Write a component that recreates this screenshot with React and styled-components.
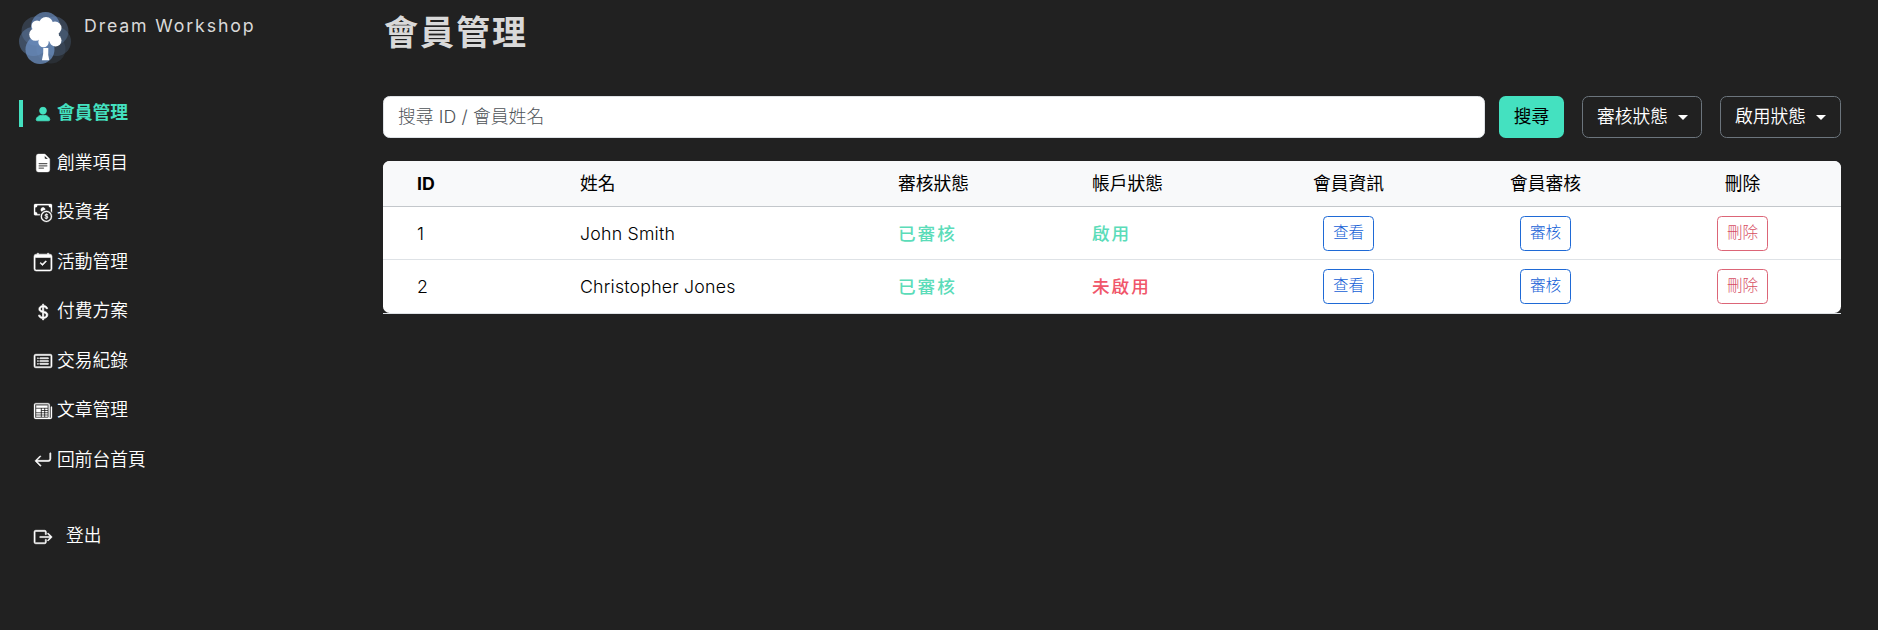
import React from "react";
import styled, { createGlobalStyle } from "styled-components";
import {
  BsPersonFill, BsFileEarmarkTextFill, BsCashCoin, BsCalendarCheck, BsCurrencyDollar,
  BsCardList, BsNewspaper, BsArrowReturnLeft, BsBoxArrowRight,
} from "react-icons/bs";

const GlobalStyle = createGlobalStyle`
  *, *::before, *::after { box-sizing: border-box; }
  body {
    margin: 0;
    background: #212121;
    color: #fff;
    font-family: Inter, "Noto Sans CJK TC", sans-serif;
    font-size: 17.75px;
    line-height: 1.5;
  }
`;

const Page = styled.div`
  display: flex;
  min-height: 630px;
  background: #212121;
`;

const Sidebar = styled.aside`
  width: 383px;
  flex: none;
  padding: 12px 0 0 19px;
`;

const Brand = styled.div`
  display: flex;
  align-items: flex-start;
  gap: 13px;
  height: 88px;
`;

const LogoMark = styled.svg`
  width: 52px;
  height: 52px;
  flex: none;
`;

const BrandName = styled.span`
  padding-top: 1px;
  color: #d9d9d9;
  letter-spacing: 1.85px;
  white-space: nowrap;
`;

const Nav = styled.nav`
  display: flex;
  flex-direction: column;
  gap: 22.5px;
`;

const NavItem = styled.a`
  display: flex;
  align-items: center;
  gap: ${(p) => p.$gap || "5px"};
  height: 27px;
  margin-top: ${(p) => p.$offset || 0};
  padding-left: 11px;
  border-left: 4px solid ${(p) => (p.$active ? "#44e1c0" : "transparent")};
  color: ${(p) => (p.$active ? "#44e1c0" : "#fff")};
  font-weight: ${(p) => (p.$active ? 700 : 350)};
  line-height: 27px;
  svg {
    flex: none;
    stroke: currentColor;
    stroke-width: ${(p) => p.$stroke};
    overflow: visible;
  }
`;

const NavLabel = styled.span`
  margin-top: -1.5px;
`;

const Main = styled.main`
  flex: 1;
  min-width: 0;
  padding: 12px 37px 0 0;
`;

const Title = styled.h2`
  margin: 0 0 42px;
  padding-left: 1px;
  color: #d9d9d9;
  font-size: 34px;
  font-weight: 700;
  line-height: 42px;
  letter-spacing: 2px;
`;

const Toolbar = styled.div`
  display: flex;
  height: 42px;
  margin-bottom: 23px;
`;

const SearchInput = styled.input`
  flex: 1;
  min-width: 0;
  padding: 0 14px;
  border: 1px solid #dee2e6;
  border-radius: 6.6px;
  background: #fff;
  font: inherit;
  font-weight: 300;
  letter-spacing: 0.1px;
  &::placeholder { color: #4d5257; opacity: 1; }
`;

const SearchButton = styled.button`
  width: 65px;
  margin-left: 14px;
  padding: 0;
  border: 0;
  border-radius: 6.6px;
  background: #44e1c0;
  color: #000;
  font: inherit;
`;

const FilterButton = styled.button`
  display: flex;
  align-items: center;
  justify-content: space-between;
  width: ${(p) => p.$width};
  margin-left: 18px;
  padding: 0 ${(p) => p.$endPadding} 0 14px;
  border: 1px solid #6c757d;
  border-radius: 6.6px;
  background: transparent;
  color: #fff;
  font: inherit;
  font-weight: 350;
  &::after {
    content: "";
    border-top: 5.3px solid #fff;
    border-left: 5.3px solid transparent;
    border-right: 5.3px solid transparent;
  }
`;

const TableFrame = styled.div`
  border-bottom: 1px solid #dee2e6;
`;

const Table = styled.table`
  width: 100%;
  table-layout: fixed;
  border-collapse: separate;
  border-spacing: 0;
  border-radius: 6.6px;
  overflow: hidden;
  background: #fff;
  color: #000;
`;

const Col = styled.col`
  width: ${(p) => p.$width};
`;

const HeadCell = styled.th`
  height: 46px;
  padding: 1px 9px 0;
  padding-left: ${(p) => (p.$first ? "34px" : "9px")};
  border-bottom: 1px solid #c3c7cb;
  background: #f8f9fa;
  text-align: ${(p) => (p.$center ? "center" : "left")};
  font-weight: ${(p) => (p.$first ? 700 : 400)};
`;

const Cell = styled.td`
  height: 53px;
  padding: ${(p) => (p.$center ? "0 9px" : "2px 9px 0")};
  padding-left: ${(p) => (p.$first ? "34px" : "9px")};
  text-align: ${(p) => (p.$center ? "center" : "left")};
  font-weight: 350;
  letter-spacing: ${(p) => (p.$center ? "normal" : "0.2px")};
  tr:not(:last-child) > & { border-bottom: 1px solid #dee2e6; }
`;

const Status = styled.span`
  color: ${(p) => (p.$ok ? "#5bdcb9" : "#f0566a")};
  font-size: 17.6px;
  font-weight: 500;
  letter-spacing: 2px;
`;

const RowButton = styled.button`
  display: inline-block;
  width: 51px;
  height: 35px;
  padding: 0 0 1px;
  border: 1px solid ${(p) => (p.$danger ? "#dc6577" : "#1f6ad6")};
  border-radius: 4.4px;
  background: transparent;
  color: ${(p) => (p.$danger ? "#d64d62" : "#1460d6")};
  font: inherit;
  font-size: 15.6px;
  font-weight: 300;
  vertical-align: middle;
`;

const navItems = [
  { label: "會員管理", icon: BsPersonFill, active: true, stroke: 0.8 },
  { label: "創業項目", icon: BsFileEarmarkTextFill, stroke: 0.3 },
  { label: "投資者", icon: BsCashCoin, stroke: 0.25 },
  { label: "活動管理", icon: BsCalendarCheck, stroke: 0.5 },
  { label: "付費方案", icon: BsCurrencyDollar, stroke: 0.6 },
  { label: "交易紀錄", icon: BsCardList, stroke: 0.5 },
  { label: "文章管理", icon: BsNewspaper, stroke: 0.25 },
  { label: "回前台首頁", icon: BsArrowReturnLeft, stroke: 0.5 },
  { label: "登出", icon: BsBoxArrowRight, gap: "14px", offset: "27px", stroke: 0.5 },
];

const columns = [
  { label: "ID", width: "188px", first: true },
  { label: "姓名", width: "318px" },
  { label: "審核狀態", width: "194px" },
  { label: "帳戶狀態", width: "167px" },
  { label: "會員資訊", width: "197px", center: true },
  { label: "會員審核", width: "197px", center: true },
  { label: "刪除", width: "197px", center: true },
];

const members = [
  { id: 1, name: "John Smith", enabled: true },
  { id: 2, name: "Christopher Jones", enabled: false },
];

function Logo() {
  return (
    <LogoMark viewBox="0 0 52 52" aria-hidden="true">
      <g fill="#6f94c9">
        <circle cx="17" cy="19" r="14.5" opacity=".25" />
        <circle cx="35" cy="19" r="14.5" opacity=".3" />
        <circle cx="37.5" cy="29.5" r="14.5" opacity=".22" />
        <circle cx="32" cy="37" r="14.5" opacity=".12" />
        <circle cx="14.5" cy="29.5" r="14.5" opacity=".4" />
        <circle cx="26.5" cy="14.5" r="14.5" opacity=".65" />
        <circle cx="21" cy="37.5" r="14.5" opacity=".72" />
      </g>
      <g fill="#fff">
        <circle cx="27" cy="12" r="7" />
        <circle cx="18" cy="14" r="5.5" />
        <circle cx="36" cy="16" r="6.5" />
        <circle cx="16.5" cy="22.5" r="6.3" />
        <circle cx="26" cy="21" r="9" />
        <circle cx="36.5" cy="28.5" r="6" />
        <circle cx="24.5" cy="30" r="5.2" />
        <circle cx="33" cy="23" r="7" />
        <path d="M24.3 36h5q-.6 7 1 12.300h-7.400q1.800-5.500 1.400-12.300z" />
      </g>
    </LogoMark>
  );
}

export default function App() {
  return (
    <>
      <GlobalStyle />
      <Page>
        <Sidebar>
          <Brand>
            <Logo />
            <BrandName>Dream Workshop</BrandName>
          </Brand>
          <Nav>
            {navItems.map(({ label, icon: Icon, active, gap, offset, stroke }) => (
              <NavItem key={label} $active={active} $gap={gap} $offset={offset} $stroke={stroke}>
                <Icon size={18} />
                <NavLabel>{label}</NavLabel>
              </NavItem>
            ))}
          </Nav>
        </Sidebar>
        <Main>
          <Title>會員管理</Title>
          <Toolbar>
            <SearchInput placeholder="搜尋 ID / 會員姓名" />
            <SearchButton>搜尋</SearchButton>
            <FilterButton $width="120px" $endPadding="13px">審核狀態</FilterButton>
            <FilterButton $width="121px" $endPadding="14px">啟用狀態</FilterButton>
          </Toolbar>
          <TableFrame>
            <Table>
              <colgroup>
                {columns.map((c) => <Col key={c.label} $width={c.width} />)}
              </colgroup>
              <thead>
                <tr>
                  {columns.map((c) => (
                    <HeadCell key={c.label} $first={c.first} $center={c.center}>{c.label}</HeadCell>
                  ))}
                </tr>
              </thead>
              <tbody>
                {members.map((m) => (
                  <tr key={m.id}>
                    <Cell $first>{m.id}</Cell>
                    <Cell>{m.name}</Cell>
                    <Cell><Status $ok>已審核</Status></Cell>
                    <Cell><Status $ok={m.enabled}>{m.enabled ? "啟用" : "未啟用"}</Status></Cell>
                    <Cell $center><RowButton>查看</RowButton></Cell>
                    <Cell $center><RowButton>審核</RowButton></Cell>
                    <Cell $center><RowButton $danger>刪除</RowButton></Cell>
                  </tr>
                ))}
              </tbody>
            </Table>
          </TableFrame>
        </Main>
      </Page>
    </>
  );
}
